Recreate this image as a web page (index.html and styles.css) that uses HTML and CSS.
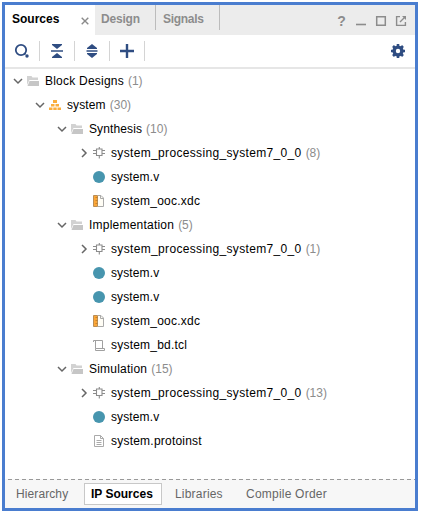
FILE: index.html
```html
<!DOCTYPE html>
<html lang="en">
<head>
<meta charset="utf-8">
<title>Sources</title>
<link rel="stylesheet" href="styles.css">
</head>
<body>
<svg class="defs" aria-hidden="true">
  <symbol id="down" viewBox="0 0 10 14"><path d="M1 5l4 4 4-4" fill="none" stroke="#666" stroke-width="1.5"/></symbol>
  <symbol id="right" viewBox="0 0 10 14"><path d="M3 3l4 4-4 4" fill="none" stroke="#666" stroke-width="1.5"/></symbol>
  <symbol id="folder" viewBox="0 0 14 14"><path d="M1 11V2h4.500l1 1.500H12V6H3.500z" fill="#d2d2d2"/><path d="M3.500 7H13v5H1.500z" fill="#c6c6c6"/></symbol>
  <symbol id="blocks" viewBox="0 0 14 14"><path d="M5 2h4v3H5zM3 6h3.500v2.500H3zM7.500 6H11v2.500H7.500zM1 9.500h3.500V12H1zM5.300 9.500h3.400V12H5.300zM9.500 9.500H13V12H9.500z" fill="#fbae3c"/></symbol>
  <symbol id="chip" viewBox="0 0 14 14"><path d="M4.500 3h5.500v6.500h-5.500zM1 4.500h3.500M1 7.500h3.500M10 4.500h3M10 7.500h3M7.300 1v2M7.300 9.500V12.500" fill="none" stroke="#8c8c8c" stroke-width="1.100"/></symbol>
  <symbol id="dot" viewBox="0 0 14 14"><circle cx="7" cy="7" r="6" fill="#4795ae"/></symbol>
  <symbol id="xdc" viewBox="0 0 14 14"><path d="M6 1.500h3l2.500 2.500v8.500H6" fill="#fffdf5" stroke="#aaa"/><path d="M8.500 1.500V4.500h3" fill="none" stroke="#aaa"/><path d="M1.500 1.500h4v11h-4z" fill="#fba637" stroke="#b98d55"/><path d="M3.500 3.500h2M3.500 6.500h2M3.500 9.500h2" stroke="#a8691f" stroke-width=".6"/></symbol>
  <symbol id="tcl" viewBox="0 0 14 14"><path d="M1.500 4V2.500h9V10.500M3.500 2.500v8M3.500 10.500V12.500H12.500V10.500H3.500" fill="none" stroke="#a0a0a0"/></symbol>
  <symbol id="doc" viewBox="0 0 14 14"><path d="M2.500 1.500h6l3 3v8h-9zM8.500 1.500v3h3M4.500 6.500h5M4.500 8.500h5M4.500 10.500h5" fill="none" stroke="#aaa"/></symbol>
</svg>
<main class="panel">
  <header class="tabs">
    <div class="tab active"><span>Sources</span><svg class="close" viewBox="0 0 8 8"><path d="M.7.7l6.600 6.600M7.300.7L.7 7.300" stroke="#8a8a8a" stroke-width="1.400"/></svg></div>
    <div class="tab design">Design</div>
    <div class="tab signals">Signals</div>
    <div class="window-actions">
      <span class="help">?</span>
      <svg viewBox="0 0 12 12"><path d="M1 9.500h10" stroke="#8c8c8c" stroke-width="1.600"/></svg>
      <svg viewBox="0 0 12 12"><path d="M1.700 1.700h8.600v8.600H1.700z" fill="none" stroke="#8c8c8c" stroke-width="1.500"/></svg>
      <svg viewBox="0 0 12 12"><path d="M5 1.600H1.600v8.800h8.800V7M5 7l4.500-4.500" fill="none" stroke="#8c8c8c" stroke-width="1.400"/><path d="M7 1h4v4z" fill="#8c8c8c"/></svg>
    </div>
  </header>
  <div class="toolbar">
    <div class="tool"><svg viewBox="0 0 16 16"><circle cx="7" cy="7" r="5.200" fill="none" stroke="#2f4d82" stroke-width="1.800"/><path d="M10.500 10.500l1 1" stroke="#2f4d82" stroke-width="1.800"/><circle cx="13" cy="13" r="1.700" fill="#2f4d82"/></svg></div>
    <div class="tool"><svg viewBox="0 0 16 16"><path d="M3 1h10v1L8 6 3 2zM2 7.200h12v1.600H2zM3 15h10v-1l-5-4-5 4z" fill="#2f4d82"/></svg></div>
    <div class="tool"><svg viewBox="0 0 16 16"><path d="M8 1l5 4v1H3V5zM2.500 7.200h11v1.600h-11zM8 15l5-4v-1H3v1z" fill="#2f4d82"/></svg></div>
    <div class="tool"><svg viewBox="0 0 16 16"><path d="M8 1v14M1 8h14" stroke="#2f4d82" stroke-width="2.400"/></svg></div>
    <svg class="gear" viewBox="0 0 16 16"><circle cx="8" cy="8" r="3.900" fill="none" stroke="#2f4d82" stroke-width="3.400"/><path d="M8 1v3M8 12v3M1 8h3M12 8h3M3 3l2 2M11 11l2 2M3 13l2-2M11 5l2-2" stroke="#2f4d82" stroke-width="2.600"/></svg>
  </div>
  <div class="tree">
    <div class="row"><svg class="chev"><use href="#down"/></svg><svg class="icon"><use href="#folder"/></svg><span>Block Designs</span><em>(1)</em></div>
    <div class="row d1"><svg class="chev"><use href="#down"/></svg><svg class="icon"><use href="#blocks"/></svg><span class="short">system</span><em>(30)</em></div>
    <div class="row d2"><svg class="chev"><use href="#down"/></svg><svg class="icon"><use href="#folder"/></svg><span class="short">Synthesis</span><em>(10)</em></div>
    <div class="row d3"><svg class="chev"><use href="#right"/></svg><svg class="icon"><use href="#chip"/></svg><span class="core">system_processing_system7_0_0</span><em>(8)</em></div>
    <div class="row d3"><svg class="chev"></svg><svg class="icon"><use href="#dot"/></svg><span class="short">system.v</span></div>
    <div class="row d3"><svg class="chev"></svg><svg class="icon"><use href="#xdc"/></svg><span>system_ooc.xdc</span></div>
    <div class="row d2"><svg class="chev"><use href="#down"/></svg><svg class="icon"><use href="#folder"/></svg><span>Implementation</span><em>(5)</em></div>
    <div class="row d3"><svg class="chev"><use href="#right"/></svg><svg class="icon"><use href="#chip"/></svg><span class="core">system_processing_system7_0_0</span><em>(1)</em></div>
    <div class="row d3"><svg class="chev"></svg><svg class="icon"><use href="#dot"/></svg><span class="short">system.v</span></div>
    <div class="row d3"><svg class="chev"></svg><svg class="icon"><use href="#dot"/></svg><span class="short">system.v</span></div>
    <div class="row d3"><svg class="chev"></svg><svg class="icon"><use href="#xdc"/></svg><span>system_ooc.xdc</span></div>
    <div class="row d3"><svg class="chev"></svg><svg class="icon"><use href="#tcl"/></svg><span>system_bd.tcl</span></div>
    <div class="row d2"><svg class="chev"><use href="#down"/></svg><svg class="icon"><use href="#folder"/></svg><span>Simulation</span><em>(15)</em></div>
    <div class="row d3"><svg class="chev"><use href="#right"/></svg><svg class="icon"><use href="#chip"/></svg><span class="core">system_processing_system7_0_0</span><em>(13)</em></div>
    <div class="row d3"><svg class="chev"></svg><svg class="icon"><use href="#dot"/></svg><span class="short">system.v</span></div>
    <div class="row d3"><svg class="chev"></svg><svg class="icon"><use href="#doc"/></svg><span>system.protoinst</span></div>
  </div>
  <footer class="views">
    <span class="view hierarchy">Hierarchy</span>
    <span class="view selected">IP Sources</span>
    <span class="view libraries">Libraries</span>
    <span class="view compile">Compile Order</span>
  </footer>
</main>
</body>
</html>
```
FILE: styles.css
```css
* { box-sizing: border-box; }
body { margin: 0; padding: 2px; background: #fff; font: 12px "Liberation Sans", Arial, sans-serif; color: #000; }
svg { display: block; flex: none; }
.defs { display: none; }
.panel { width: 416px; height: 509px; border: 3px solid #4a7dcf; display: flex; flex-direction: column; overflow: hidden; white-space: nowrap; }
.tabs { height: 30px; flex: none; background: #ececec; display: flex; font-weight: bold; color: #8c8c8c; }
.tab { height: 25px; line-height: 29px; padding-left: 7px; }
.tab.active { width: 90px; height: 30px; background: #fff; color: #000; display: flex; }
.close { width: 8px; height: 8px; margin: 12px 6px 0 auto; }
.design { width: 61px; padding-left: 6px; border-right: 1px solid #bcbcbc; letter-spacing: -.2px; }
.signals { width: 64px; border-right: 1px solid #bcbcbc; letter-spacing: -.3px; }
.window-actions { margin-left: auto; padding: 2px 8px 0 0; display: flex; align-items: center; gap: 8px; }
.window-actions svg { width: 12px; height: 12px; }
.help { font-size: 14px; width: 11px; text-align: center; }
.toolbar { height: 34px; flex: none; border-bottom: 2px solid #e6e6e6; display: flex; align-items: center; }
.tool { width: 35px; height: 20px; border-right: 1px solid #d4d4d4; display: flex; align-items: center; justify-content: center; }
.tool svg, .gear { width: 16px; height: 16px; }
.gear { margin: 0 9px 0 auto; }
.tree { flex: 1; }
.row { height: 24px; display: flex; align-items: center; padding-left: 8px; }
.d1 { padding-left: 30px; }
.d2 { padding-left: 52px; }
.d3 { padding-left: 74px; }
.chev { width: 10px; height: 14px; margin-right: 3px; }
.icon { width: 14px; height: 14px; margin-right: 5px; }
.row span { letter-spacing: .22px; }
.row .short { letter-spacing: .12px; }
.row .core { letter-spacing: .34px; }
.row em { font-style: normal; color: #8c8c8c; margin-left: 4px; }
.views { height: 29px; flex: none; background: linear-gradient(90deg, #999 4px, transparent 4px) 3px 0 / 7px 1px repeat-x, #f7f7f7; display: flex; align-items: flex-start; padding: 4px 0 0 11px; color: #666; line-height: 22px; }
.view { height: 22px; }
.hierarchy { width: 68px; letter-spacing: .1px; }
.selected { width: 78px; border: 1px solid #c8c8c8; background: #fff; color: #000; font-weight: bold; line-height: 20px; padding-left: 6px; }
.libraries { width: 84px; padding-left: 13px; letter-spacing: .2px; }
.compile { letter-spacing: .22px; }
```
